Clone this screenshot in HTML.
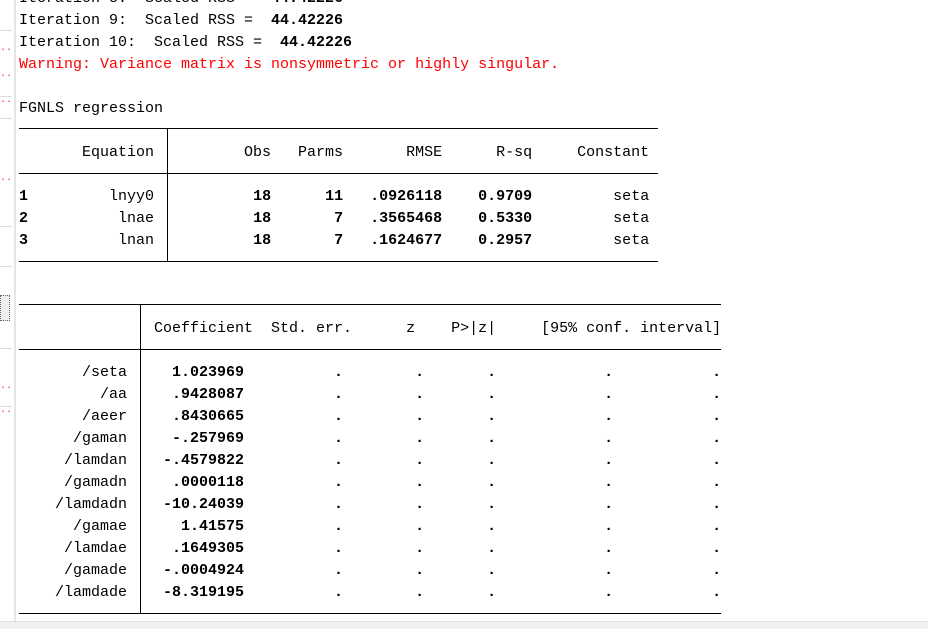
<!DOCTYPE html>
<html><head><style>
body{margin:0;width:928px;height:628px;overflow:hidden;background:#fff;position:relative;font-family:"Liberation Mono",monospace;font-size:15px;color:#000}
pre{margin:0;position:absolute;left:19px;top:-12px;font:inherit;line-height:22px;white-space:pre}
b{font-weight:bold}
.r{color:#f00}
.h{position:absolute;height:1px;background:#000;left:19px}
.v{position:absolute;width:1px;background:#000}
.g{position:absolute;left:0;width:12px;height:1px;background:#ddd}
.d{position:absolute;left:0;color:#e33;font-size:10px;line-height:6px}
</style></head><body>
<div style="position:absolute;left:14px;top:0;width:2px;height:628px;background:#e6e6e6"></div>
<div class="g" style="top:30px"></div><div class="g" style="top:96px"></div><div class="g" style="top:118px"></div><div class="g" style="top:226px"></div><div class="g" style="top:266px"></div><div class="g" style="top:348px"></div><div class="g" style="top:406px"></div>
<div class="d" style="top:48px">··</div><div class="d" style="top:74px">··</div><div class="d" style="top:100px">··</div><div class="d" style="top:178px">··</div><div class="d" style="top:386px">··</div><div class="d" style="top:410px">··</div>
<div style="position:absolute;left:0;top:295px;width:8px;height:24px;border:1px dotted #666;background:#eee"></div>
<div style="position:absolute;left:0;top:621px;width:928px;height:7px;background:#f0f0f0;border-top:1px solid #ddd"></div>
<pre>Iteration 8:  Scaled RSS =  <b>44.42226</b>
Iteration 9:  Scaled RSS =  <b>44.42226</b>
Iteration 10:  Scaled RSS =  <b>44.42226</b>
<span class="r">Warning: Variance matrix is nonsymmetric or highly singular.</span>

FGNLS regression

       Equation          Obs   Parms       RMSE      R-sq     Constant

<b>1</b>         lnyy0           <b>18</b>      <b>11</b>   <b>.0926118</b>    <b>0.9709</b>         seta
<b>2</b>          lnae           <b>18</b>       <b>7</b>   <b>.3565468</b>    <b>0.5330</b>         seta
<b>3</b>          lnan           <b>18</b>       <b>7</b>   <b>.1624677</b>    <b>0.2957</b>         seta



               Coefficient  Std. err.      z    P>|z|     [95% conf. interval]

       /seta     <b>1.023969          .        .       .            .           .</b>
         /aa     <b>.9428087          .        .       .            .           .</b>
       /aeer     <b>.8430665          .        .       .            .           .</b>
      /gaman     <b>-.257969          .        .       .            .           .</b>
     /lamdan    <b>-.4579822          .        .       .            .           .</b>
     /gamadn     <b>.0000118          .        .       .            .           .</b>
    /lamdadn    <b>-10.24039          .        .       .            .           .</b>
      /gamae      <b>1.41575          .        .       .            .           .</b>
     /lamdae     <b>.1649305          .        .       .            .           .</b>
     /gamade    <b>-.0004924          .        .       .            .           .</b>
    /lamdade    <b>-8.319195          .        .       .            .           .</b>
</pre>
<div class="h" style="top:128px;width:639px"></div>
<div class="h" style="top:173px;width:639px"></div>
<div class="h" style="top:261px;width:639px"></div>
<div class="v" style="left:167px;top:128px;height:134px"></div>
<div class="h" style="top:304px;width:702px"></div>
<div class="h" style="top:349px;width:702px"></div>
<div class="h" style="top:613px;width:702px"></div>
<div class="v" style="left:140px;top:304px;height:310px"></div>
</body></html>
